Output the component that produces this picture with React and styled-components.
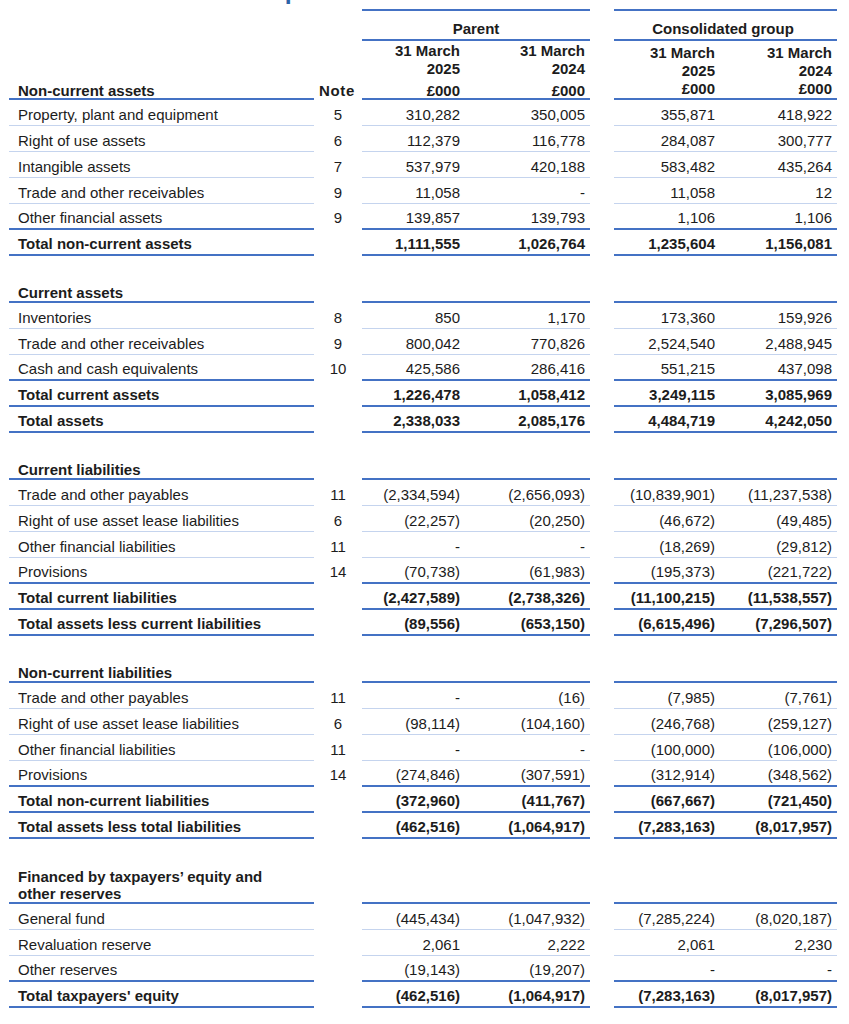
import React from "react";
import styled, { createGlobalStyle, css } from "styled-components";

const DARK = "#4472C4";
const LIGHT = "#C5D4EE";
const INK = "#1c1c1c";
const COLS = "305px 48px 103px 125px 24px 106px 117px";

const GlobalStyle = createGlobalStyle`
  html, body { margin: 0; padding: 0; background: #ffffff; }
  body {
    font-family: "Liberation Sans", Arial, sans-serif;
    font-size: 15px;
    color: ${INK};
  }
`;

const Page = styled.div`
  width: 849px;
  box-sizing: border-box;
  padding: 0 0 16px 9px;
`;

const TitleClip = styled.div`
  height: 4px;
  overflow: hidden;
`;

const Title = styled.h1`
  margin: -22px 0 0 9px;
  font-size: 25px;
  line-height: 25px;
  font-weight: 700;
  color: #2c64a8;
  white-space: nowrap;
`;

const Header = styled.div`
  display: grid;
  grid-template-columns: ${COLS};
  margin-top: 5px;
`;

const HeadLabel = styled.div`
  display: flex;
  align-items: flex-end;
  padding: 0 30px 0 9px;
  font-weight: 700;
  line-height: 15px;
  border-bottom: 2px solid ${DARK};
`;

const HeadNote = styled.div`
  display: flex;
  align-items: flex-end;
  justify-content: center;
  padding-bottom: 2px;
  padding-right: 2px;
  font-weight: 700;
  line-height: 15px;
  letter-spacing: 0.7px;
`;

const Group = styled.div`
  grid-column: span 2;
  display: flex;
  flex-direction: column;
`;

const GroupTitle = styled.div`
  height: 32px;
  box-sizing: border-box;
  border-top: 2px solid ${DARK};
  border-bottom: 2px solid ${DARK};
  display: flex;
  align-items: flex-end;
  justify-content: center;
  padding: 0 ${(p) => p.$shift || 0}px 2px 0;
  line-height: 17px;
  font-weight: 700;
`;

const SubHeads = styled.div`
  display: grid;
  grid-template-columns: ${(p) => p.$cols};
  height: 59px;
  box-sizing: border-box;
  border-bottom: 2px solid ${DARK};
`;

const SubHead = styled.div`
  display: flex;
  flex-direction: column;
  justify-content: flex-end;
  align-items: flex-end;
  padding-right: 5px;
  font-weight: 700;
  text-align: right;
`;

const DateLine = styled.span`
  line-height: 18px;
`;

const Currency = styled.span`
  line-height: ${(p) => (p.$tight ? "15px" : "18px")};
  margin-top: ${(p) => (p.$tight ? "5px" : "0")};
`;

const Spacer = styled.div`
  height: ${(p) => p.$h || 21}px;
`;

const Row = styled.div`
  display: grid;
  grid-template-columns: ${COLS};
  height: ${(p) => p.$h || 26}px;
  font-weight: ${(p) => (p.$bold ? 700 : 400)};
`;

const lineCss = css`
  box-sizing: border-box;
  border-bottom: ${(p) => (p.$line === "dark" ? 2 : 1)}px solid
    ${(p) => (p.$clear ? "transparent" : p.$line === "dark" ? DARK : LIGHT)};
  padding-bottom: ${(p) => (p.$head ? 0 : 2)}px;
  line-height: 17px;
  display: flex;
  align-items: flex-end;
`;

const Label = styled.div`
  ${lineCss};
  padding-left: 9px;
  padding-right: 30px;
`;

const Note = styled.div`
  ${lineCss};
  justify-content: center;
`;

const Value = styled.div`
  ${lineCss};
  justify-content: flex-end;
  padding-right: 5px;
  white-space: nowrap;
`;

const Gap = styled.div``;

const sections = [
  {
    rows: [
      ["Property, plant and equipment", "5", "310,282", "350,005", "355,871", "418,922"],
      ["Right of use assets", "6", "112,379", "116,778", "284,087", "300,777"],
      ["Intangible assets", "7", "537,979", "420,188", "583,482", "435,264"],
      ["Trade and other receivables", "9", "11,058", "-", "11,058", "12"],
      ["Other financial assets", "9", "139,857", "139,793", "1,106", "1,106", "dark"],
      ["Total non-current assets", "", "1,111,555", "1,026,764", "1,235,604", "1,156,081", "total"],
    ],
  },
  {
    title: "Current assets",
    rows: [
      ["Inventories", "8", "850", "1,170", "173,360", "159,926"],
      ["Trade and other receivables", "9", "800,042", "770,826", "2,524,540", "2,488,945"],
      ["Cash and cash equivalents", "10", "425,586", "286,416", "551,215", "437,098", "dark"],
      ["Total current assets", "", "1,226,478", "1,058,412", "3,249,115", "3,085,969", "total"],
      ["Total assets", "", "2,338,033", "2,085,176", "4,484,719", "4,242,050", "total"],
    ],
  },
  {
    title: "Current liabilities",
    rows: [
      ["Trade and other payables", "11", "(2,334,594)", "(2,656,093)", "(10,839,901)", "(11,237,538)"],
      ["Right of use asset lease liabilities", "6", "(22,257)", "(20,250)", "(46,672)", "(49,485)"],
      ["Other financial liabilities", "11", "-", "-", "(18,269)", "(29,812)"],
      ["Provisions", "14", "(70,738)", "(61,983)", "(195,373)", "(221,722)", "dark"],
      ["Total current liabilities", "", "(2,427,589)", "(2,738,326)", "(11,100,215)", "(11,538,557)", "total"],
      ["Total assets less current liabilities", "", "(89,556)", "(653,150)", "(6,615,496)", "(7,296,507)", "total"],
    ],
  },
  {
    title: "Non-current liabilities",
    rows: [
      ["Trade and other payables", "11", "-", "(16)", "(7,985)", "(7,761)"],
      ["Right of use asset lease liabilities", "6", "(98,114)", "(104,160)", "(246,768)", "(259,127)"],
      ["Other financial liabilities", "11", "-", "-", "(100,000)", "(106,000)"],
      ["Provisions", "14", "(274,846)", "(307,591)", "(312,914)", "(348,562)", "dark"],
      ["Total non-current liabilities", "", "(372,960)", "(411,767)", "(667,667)", "(721,450)", "total"],
      ["Total assets less total liabilities", "", "(462,516)", "(1,064,917)", "(7,283,163)", "(8,017,957)", "total"],
    ],
  },
  {
    title: "Financed by taxpayers\u2019 equity and other reserves",
    titleHeight: 44,
    rows: [
      ["General fund", "", "(445,434)", "(1,047,932)", "(7,285,224)", "(8,020,187)"],
      ["Revaluation reserve", "", "2,061", "2,222", "2,061", "2,230"],
      ["Other reserves", "", "(19,143)", "(19,207)", "-", "-", "dark"],
      ["Total taxpayers' equity", "", "(462,516)", "(1,064,917)", "(7,283,163)", "(8,017,957)", "total"],
    ],
  },
];

function TableRow({ cells, kind }) {
  const [label, note, a, b, c, d] = cells;
  const line = kind === "dark" || kind === "total" ? "dark" : "light";
  return (
    <Row $bold={kind === "total"}>
      <Label $line={line}>{label}</Label>
      <Note $line={line} $clear>{note}</Note>
      <Value $line={line}>{a}</Value>
      <Value $line={line}>{b}</Value>
      <Gap />
      <Value $line={line}>{c}</Value>
      <Value $line={line}>{d}</Value>
    </Row>
  );
}

function SectionHead({ title, height }) {
  return (
    <Row $bold $h={height}>
      <Label $line="dark" $head>{title}</Label>
      <Note $line="dark" $clear $head />
      <Value $line="dark" $head />
      <Value $line="dark" $head />
      <Gap />
      <Value $line="dark" $head />
      <Value $line="dark" $head />
    </Row>
  );
}

export default function App() {
  return (
    <>
      <GlobalStyle />
      <Page>
        <TitleClip>
          <Title>Statement of financial position</Title>
        </TitleClip>
        <Header>
          <HeadLabel>Non-current assets</HeadLabel>
          <HeadNote>Note</HeadNote>
          <Group>
            <GroupTitle>Parent</GroupTitle>
            <SubHeads $cols="103px 125px">
              <SubHead>
                <DateLine>31 March</DateLine>
                <DateLine>2025</DateLine>
                <Currency $tight>£000</Currency>
              </SubHead>
              <SubHead>
                <DateLine>31 March</DateLine>
                <DateLine>2024</DateLine>
                <Currency $tight>£000</Currency>
              </SubHead>
            </SubHeads>
          </Group>
          <Gap />
          <Group>
            <GroupTitle $shift={5}>Consolidated group</GroupTitle>
            <SubHeads $cols="106px 117px">
              <SubHead>
                <DateLine>31 March</DateLine>
                <DateLine>2025</DateLine>
                <Currency>£000</Currency>
              </SubHead>
              <SubHead>
                <DateLine>31 March</DateLine>
                <DateLine>2024</DateLine>
                <Currency>£000</Currency>
              </SubHead>
            </SubHeads>
          </Group>
        </Header>
        {sections.map((s, i) => (
          <React.Fragment key={i}>
            {s.title && (
              <>
                <Spacer />
                <SectionHead title={s.title} height={s.titleHeight} />
              </>
            )}
            {s.rows.map((r, j) => (
              <TableRow key={j} cells={r} kind={r[6]} />
            ))}
          </React.Fragment>
        ))}
      </Page>
    </>
  );
}
